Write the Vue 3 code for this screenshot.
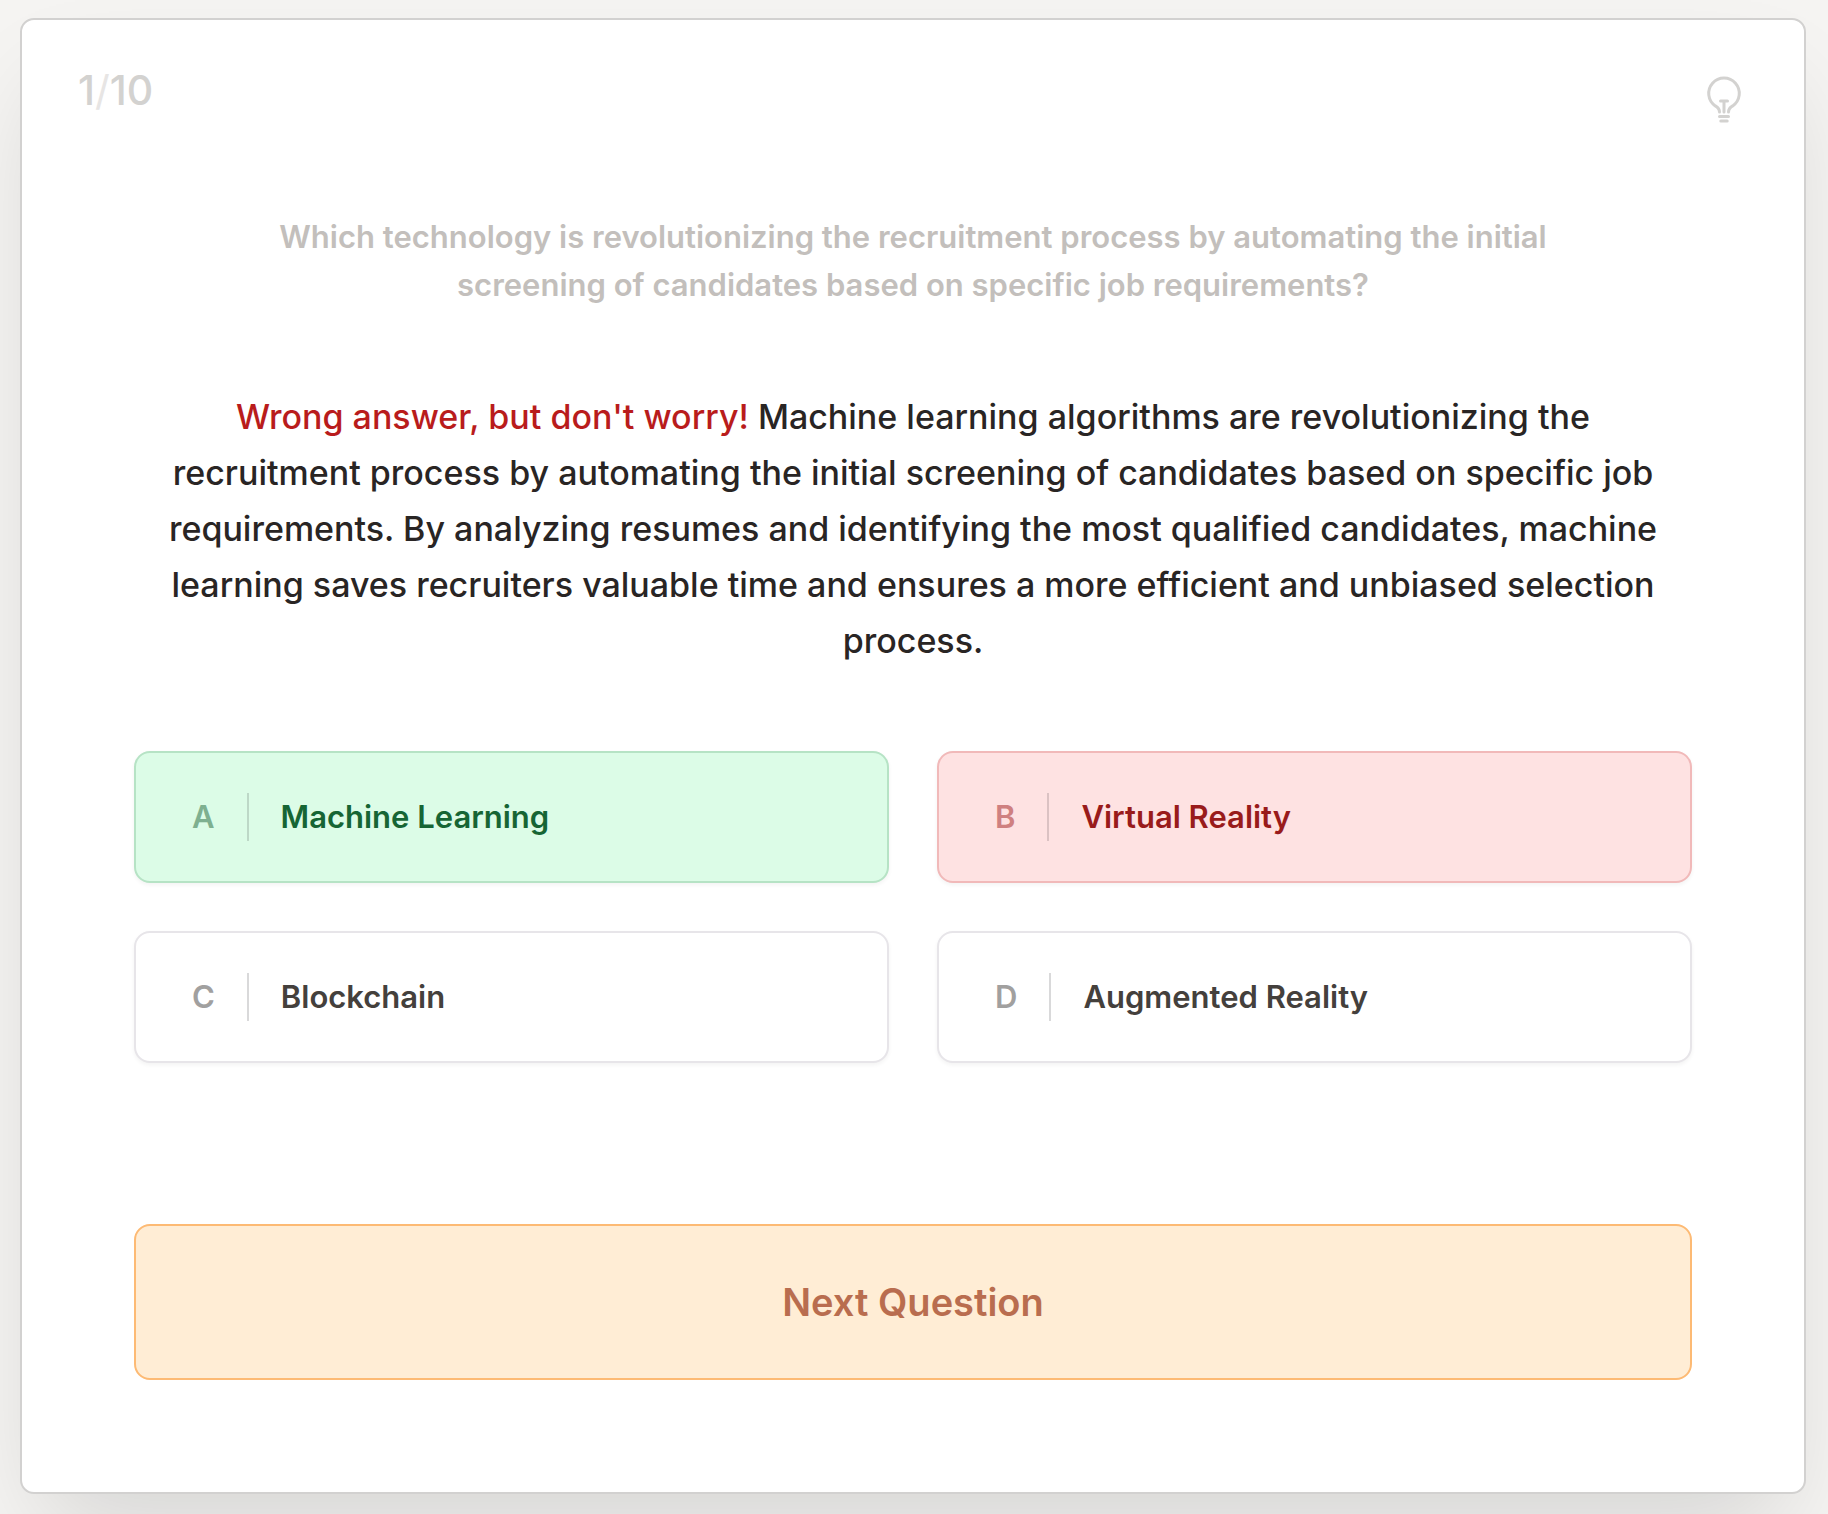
<script setup>
const options = [
  { letter: 'A', label: 'Machine Learning', state: 'correct' },
  { letter: 'B', label: 'Virtual Reality', state: 'wrong' },
  { letter: 'C', label: 'Blockchain', state: 'idle' },
  { letter: 'D', label: 'Augmented Reality', state: 'idle' },
]
</script>

<template>
  <main class="page">
    <section class="card">
      <header class="top">
        <p class="count">1<span class="slash">/</span>10</p>
        <button class="hint" type="button" aria-label="Show a hint">
          <svg viewBox="0 0 48 48" width="48" height="48" fill="none" stroke="currentColor" stroke-width="3" stroke-linecap="round" stroke-linejoin="round" aria-hidden="true">
            <path d="M19.5 36c0-3-1.2-4.400-4.200-6.100A15.300 15.300 0 1 1 32.700 29.900c-3 1.700-4.200 3.100-4.200 6.100" />
            <path d="M20.500 25h7M24 25v11M19.500 40.500h9M20.800 45h6.400" />
          </svg>
        </button>
      </header>

      <h1 class="question">Which technology is revolutionizing the recruitment process by automating the initial screening of candidates based on specific job requirements?</h1>

      <p class="feedback">
        <span class="verdict">Wrong answer, but don't worry!</span>
        Machine learning algorithms are revolutionizing the recruitment process by automating the initial screening of candidates based on specific job requirements. By analyzing resumes and identifying the most qualified candidates, machine learning saves recruiters valuable time and ensures a more efficient and unbiased selection process.
      </p>

      <div class="options">
        <button v-for="o in options" :key="o.letter" type="button" class="option" :class="o.state">
          <span class="letter">{{ o.letter }}</span>
          <span class="label">{{ o.label }}</span>
        </button>
      </div>

      <button class="next" type="button">Next Question</button>
    </section>
  </main>
</template>

<style>
body {
  margin: 0;
  background: #f5f4f2;
}
</style>

<style scoped>
.page {
  box-sizing: border-box;
  min-height: 100vh;
  padding: 18px 22px 20px 20px;
  overflow: hidden;
  background: #f5f4f2;
  font-family: Inter, "Liberation Sans", sans-serif;
}
.card {
  display: flex;
  flex-direction: column;
  padding: 48px 112px 112px;
  border: 2px solid #d2d1d0;
  border-radius: 14px;
  background: #fff;
  box-shadow: 0 50px 100px -24px rgba(0, 0, 0, 0.14);
}
.top {
  display: flex;
  justify-content: space-between;
  align-items: flex-start;
  height: 64px;
  margin: 0 -56px;
}
.count {
  margin: 0;
  font-size: 41px;
  line-height: 44px;
  font-weight: 500;
  color: #d3d2d0;
}
.slash {
  font-weight: 400;
  color: #e7e5e4;
}
.hint {
  display: block;
  margin: 8px 0 0;
  padding: 0;
  border: 0;
  background: none;
  color: #d3d2d0;
  cursor: pointer;
}
.hint svg {
  display: block;
}
.question {
  max-width: 1340px;
  margin: 81px auto 0;
  font-size: 31px;
  line-height: 48px;
  font-weight: 600;
  text-align: center;
  color: #c3bfbc;
}
.feedback {
  margin: 80px 0 0;
  padding: 0 16px;
  font-size: 34px;
  line-height: 56px;
  font-weight: 500;
  text-align: center;
  color: #292524;
}
.verdict {
  color: #b91c1c;
}
.options {
  display: grid;
  grid-template-columns: repeat(2, 1fr);
  gap: 48px;
  margin-top: 82px;
}
.option {
  display: flex;
  align-items: center;
  gap: 32px;
  padding: 40px 56px;
  border: 2px solid #e7e5e9;
  border-radius: 16px;
  background: #fff;
  box-shadow: 0 2px 4px rgba(0, 0, 0, 0.05);
  font-family: inherit;
  font-size: 31px;
  line-height: 48px;
  font-weight: 600;
  text-align: left;
  color: #44403c;
  cursor: pointer;
}
.letter {
  color: #a1a09f;
}
.label {
  padding-left: 32px;
  border-left: 2px solid #d9d9da;
}
.correct {
  border-color: #b6e3c5;
  background: #dcfce7;
  color: #166534;
}
.correct .letter {
  color: #7eb090;
}
.correct .label {
  border-left-color: #bdd8c7;
}
.wrong {
  border-color: #f1b9b9;
  background: #fee2e2;
  color: #991b1b;
}
.wrong .letter {
  color: #cf8080;
}
.wrong .label {
  border-left-color: #dbc2c3;
}
.next {
  margin-top: 161px;
  padding: 48px;
  border: 2px solid #fdba74;
  border-radius: 16px;
  background: #ffedd5;
  font-family: inherit;
  font-size: 38px;
  line-height: 56px;
  font-weight: 600;
  color: #b96d4f;
  cursor: pointer;
}
</style>
